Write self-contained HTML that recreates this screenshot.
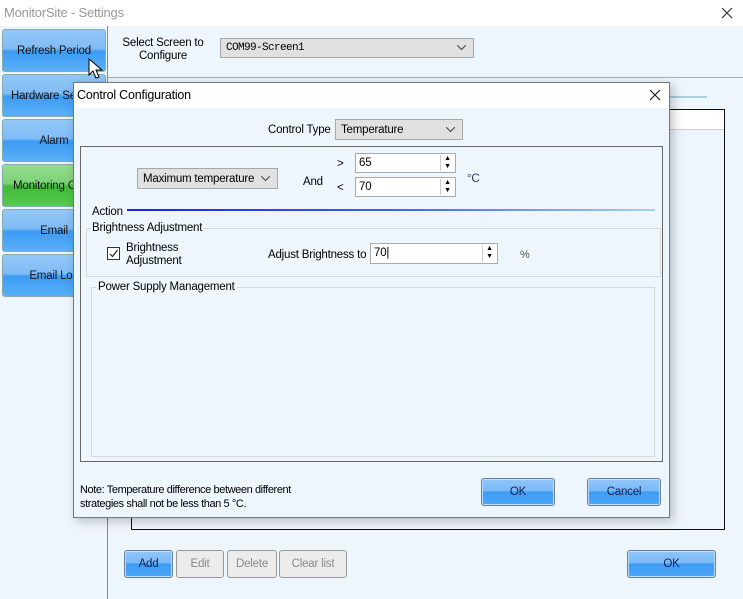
<!DOCTYPE html>
<html><head><meta charset="utf-8"><style>
*{box-sizing:border-box;margin:0;padding:0}
body{width:743px;height:599px;overflow:hidden;font-family:"Liberation Sans",sans-serif;font-size:11.5px;letter-spacing:-0.2px;color:#000;background:#eef6fd;position:relative}
.a{position:absolute;white-space:nowrap}
.btn{position:absolute;border:1px solid #6d7f95;border-radius:3px;background:linear-gradient(#8fc6fa 0%,#7cb9f6 45%,#3d9cf5 50%,#4aa6f7 100%);text-align:center;color:#102050;font-size:11.5px;box-shadow:inset 0 0 0 1px #b8dcff}
.dis{background:#ececec;color:#888;box-shadow:none;border-color:#999}
.sb{position:absolute;left:2px;width:104px;height:43px;border:1px solid #8aa;border-radius:3px;background:linear-gradient(#92c8f8 0%,#80bcf6 45%,#3c9bf5 52%,#5ab0f7 100%);padding-top:15px;text-align:center;white-space:nowrap;overflow:hidden;color:#111}
.sel{position:absolute;background:#e1e1e1;border:1px solid #a8a8a8;padding:4px 5px 0;white-space:nowrap}
.chev{position:absolute;right:7px;top:7px}
.inp{position:absolute;background:#fff;border:1px solid #aaa;padding:3px 3px 0}
.spin{position:absolute;right:1px;top:1px;width:14px;bottom:1px;border-left:1px solid #ccc;font-size:7px;line-height:8px;text-align:center;color:#000}
</style></head><body>
<div class="a" style="left:0;top:0;width:743px;height:26px;background:#fff;color:#999;font-size:13px;padding:5px 4px">MonitorSite - Settings</div>
<svg class="a" style="left:721px;top:7px" width="12" height="12"><path d="M1 1L11 11M11 1L1 11" stroke="#333" stroke-width="1.2"/></svg>
<div class="a" style="left:0;top:26px;width:108px;height:573px;border-right:1px solid #888;background:#eef6fd"></div>
<div class="a" style="left:108px;top:77px;width:635px;height:1px;background:#aab"></div>
<div class="sb" style="top:29px">Refresh Period</div>
<div class="sb" style="top:74px;padding-left:8px;text-align:left">Hardware Settings</div>
<div class="sb" style="top:119px">Alarm</div>
<div class="sb" style="top:164px;background:linear-gradient(#93dc8e 0%,#7ed278 45%,#3fbb37 52%,#56c94e 100%);text-align:left;padding-left:10px">Monitoring Config</div>
<div class="sb" style="top:209px">Email</div>
<div class="sb" style="top:254px">Email Log</div>
<svg class="a" style="left:88px;top:58px" width="16" height="22"><path d="M1 1 L1 17 L5 13 L8 20 L11 19 L8 12 L14 12 Z" fill="#fff" stroke="#000" stroke-width="1"/></svg>
<div class="a" style="left:118px;top:37px;width:90px;text-align:center;line-height:13px;white-space:normal">Select Screen to Configure</div>
<div class="sel" style="left:220px;top:38px;width:254px;height:20px;font-family:'Liberation Mono',monospace;font-size:11px;letter-spacing:-0.6px;padding-top:3px">COM99-Screen1<svg class="chev" style="top:6px" width="9" height="6"><path d="M0 0L4.5 4.5L9 0" fill="none" stroke="#444"/></svg></div>
<div class="a" style="left:655px;top:96px;width:52px;height:2px;background:#a8d0e6"></div>
<div class="a" style="left:131px;top:109px;width:594px;height:421px;border:1px solid #111;background:#eef6fd"></div>
<div class="a" style="left:132px;top:110px;width:592px;height:20px;background:#fff;border-bottom:1px solid #ccc"></div>
<div class="btn" style="left:124px;top:550px;width:49px;height:28px;padding-top:7px">Add</div>
<div class="btn dis" style="left:176px;top:550px;width:48px;height:28px;padding-top:7px">Edit</div>
<div class="btn dis" style="left:227px;top:550px;width:50px;height:28px;padding-top:7px">Delete</div>
<div class="btn dis" style="left:279px;top:550px;width:68px;height:28px;padding-top:7px">Clear list</div>
<div class="btn" style="left:627px;top:550px;width:89px;height:28px;padding-top:7px">OK</div>
<div class="a" style="left:73px;top:82px;width:597px;height:436px;border:1px solid #777;background:#eef6fd;box-shadow:3px 3px 10px rgba(0,0,0,.25)">
 <div class="a" style="left:0;top:0;width:595px;height:25px;background:#fff;font-size:12.5px;padding:5px 3px">Control Configuration</div>
 <svg class="a" style="left:575px;top:6px" width="12" height="12"><path d="M1 1L11 11M11 1L1 11" stroke="#222" stroke-width="1.2"/></svg>
 <div class="a" style="left:194px;top:41px">Control Type</div>
 <div class="sel" style="left:261px;top:36px;width:128px;height:21px">Temperature<svg class="chev" width="9" height="6"><path d="M0 0L4.5 4.5L9 0" fill="none" stroke="#444"/></svg></div>
 <div class="a" style="left:6px;top:63px;width:583px;height:316px;border:1px solid #666"></div>
 <div class="sel" style="left:63px;top:85px;width:141px;height:21px">Maximum temperature<svg class="chev" width="9" height="6"><path d="M0 0L4.5 4.5L9 0" fill="none" stroke="#444"/></svg></div>
 <div class="a" style="left:229px;top:93px">And</div>
 <div class="a" style="left:263px;top:75px">&gt;</div>
 <div class="a" style="left:263px;top:99px">&lt;</div>
 <div class="inp" style="left:281px;top:70px;width:101px;height:20px">65<div class="spin">▲<br>▼</div></div>
 <div class="inp" style="left:281px;top:94px;width:101px;height:20px">70<div class="spin">▲<br>▼</div></div>
 <div class="a" style="left:393px;top:90px;color:#246">°C</div>
 <div class="a" style="left:18px;top:123px">Action</div>
 <div class="a" style="left:53px;top:126px;width:528px;height:2px;background:linear-gradient(90deg,#1a22e0,#4060e8 50%,#a8d0e6)"></div>
 <div class="a" style="left:12px;top:145px;width:575px;height:49px;border:1px solid #d8d8d8"></div>
 <div class="a" style="left:17px;top:139px;background:#eef6fd;padding:0 1px">Brightness Adjustment</div>
 <div class="a" style="left:33px;top:164px;width:13px;height:13px;border:1px solid #333;background:#fff"><svg width="11" height="11" style="position:absolute;left:0;top:0"><path d="M2 6L4.5 8.5L9.5 2" fill="none" stroke="#222" stroke-width="1.2"/></svg></div>
 <div class="a" style="left:52px;top:159px;line-height:13px">Brightness<br>Adjustment</div>
 <div class="a" style="left:194px;top:166px">Adjust Brightness to</div>
 <div class="inp" style="left:296px;top:160px;width:128px;height:21px">70|<div class="spin">▲<br>▼</div></div>
 <div class="a" style="left:446px;top:166px;font-size:11px;color:#554">%</div>
 <div class="a" style="left:17px;top:204px;width:564px;height:170px;border:1px solid #d8d8d8"></div>
 <div class="a" style="left:22px;top:198px;background:#eef6fd;padding:0 2px">Power Supply Management</div>
 <div class="a" style="left:6px;top:400px;line-height:14px;font-size:11px;letter-spacing:-0.4px">Note: Temperature difference between different<br>strategies shall not be less than 5 °C.</div>
 <div class="btn" style="left:407px;top:395px;width:74px;height:28px;padding-top:7px">OK</div>
 <div class="btn" style="left:513px;top:395px;width:74px;height:28px;padding-top:7px">Cancel</div>
</div>
</body></html>
